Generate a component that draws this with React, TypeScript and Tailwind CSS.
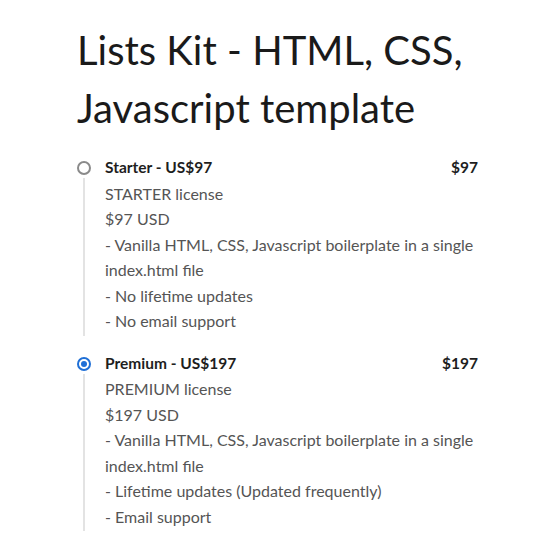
const plans = [
  {
    name: "Starter - US$97",
    price: "$97",
    checked: false,
    lines: [
      "STARTER license",
      "$97 USD",
      "- Vanilla HTML, CSS, Javascript boilerplate in a single index.html file",
      "- No lifetime updates",
      "- No email support",
    ],
  },
  {
    name: "Premium - US$197",
    price: "$197",
    checked: true,
    lines: [
      "PREMIUM license",
      "$197 USD",
      "- Vanilla HTML, CSS, Javascript boilerplate in a single index.html file",
      "- Lifetime updates (Updated frequently)",
      "- Email support",
    ],
  },
];

function Radio({ checked }: { checked: boolean }) {
  if (checked) {
    return (
      <span className="w-[14px] h-[14px] rounded-full border-2 border-[#1f6fd6] flex items-center justify-center">
        <span className="w-[6px] h-[6px] rounded-full bg-[#1f6fd6]" />
      </span>
    );
  }
  return <span className="w-[14px] h-[14px] rounded-full border-2 border-[#8a8a8a]" />;
}

export default function App() {
  return (
    <div className="min-h-[555px] bg-white pl-[77px] pr-[80px] pt-[21px] font-['Lato',sans-serif]">
      <h1 className="text-[40px] leading-[58px] text-[#1a1a1a] font-normal">
        Lists Kit - HTML, CSS, Javascript template
      </h1>
      <div className="mt-[18px] flex flex-col gap-[17px]">
        {plans.map((p) => (
          <div key={p.name} className="flex gap-[14px]">
            <div className="w-[14px] flex flex-col items-center pt-[6px]">
              <Radio checked={p.checked} />
              <div className="w-[2px] flex-1 bg-[#e3e3e3] mt-[3px] -mb-[2px]" />
            </div>
            <div className="flex-1 text-[16px] leading-[25.5px]">
              <div className="flex justify-between text-[15.5px] font-bold text-[#1e1e1e]">
                <span>{p.name}</span>
                <span>{p.price}</span>
              </div>
              {p.lines.map((l) => (
                <p key={l} className="text-[#555]">
                  {l}
                </p>
              ))}
            </div>
          </div>
        ))}
      </div>
    </div>
  );
}
